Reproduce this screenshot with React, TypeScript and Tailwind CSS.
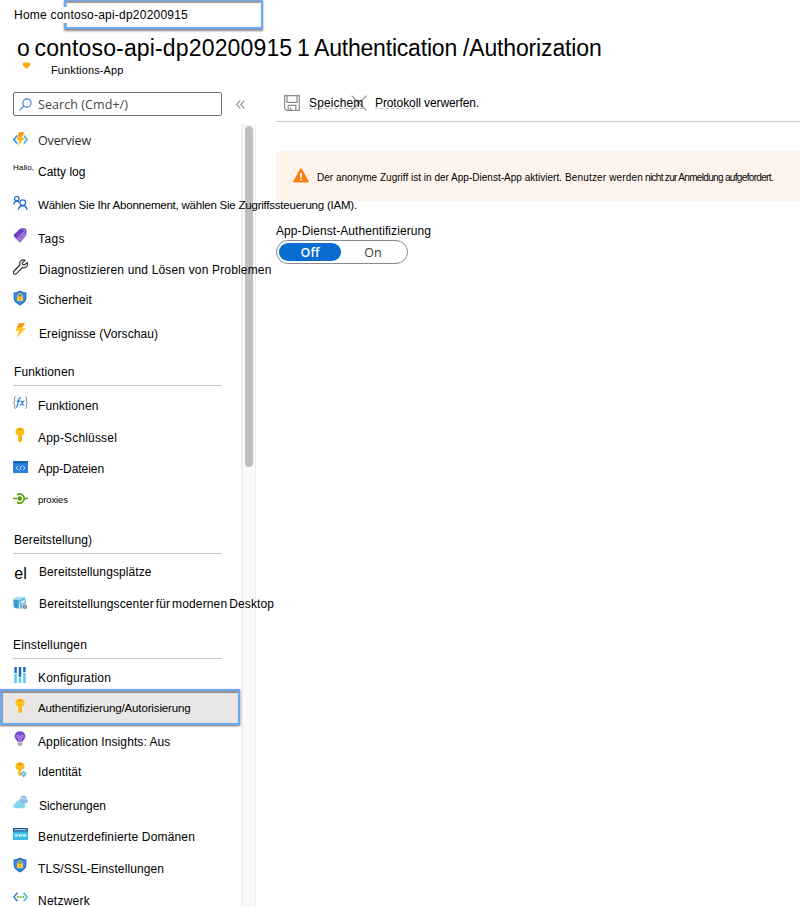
import type { ReactNode } from "react";

function FunctionIcon() {
  return (
    <svg width="15" height="15" viewBox="0 0 15 15" fill="none">
      <path d="M4.2 3.4L0.8 7.5L4.2 11.6" stroke="#2b88e0" strokeWidth="1.5" />
      <path d="M10.8 3.4L14.2 7.5L10.8 11.6" stroke="#32b5e8" strokeWidth="1.5" />
      <path d="M11 0.2H6L3.4 8.2H6.6L4.2 14.8L12 5.8H8.6Z" fill="#ffb52b" />
      <path d="M11 0.2H6L4.6 4.6H9.4Z" fill="#fb9a1a" />
    </svg>
  );
}

function PeopleIcon() {
  return (
    <svg width="16" height="16" viewBox="0 0 16 16" fill="none" stroke="#2a6fdb" strokeWidth="1.4">
      <circle cx="4" cy="3.4" r="2.4" />
      <path d="M0.7 9.6C0.9 7.4 2.2 6.2 4 6.2C5.2 6.2 6 6.6 6.6 7.3" />
      <circle cx="10.4" cy="7.6" r="3" />
      <path d="M5.7 15.4C6 12.6 7.8 10.9 10.4 10.9C13 10.9 14.7 12.6 15 15.4" />
    </svg>
  );
}

function TagIcon() {
  return (
    <svg width="15" height="15" viewBox="0 0 15 15">
      <path d="M1 6.6L6.8 1Q7.6 0.2 8.6 0.3L12 0.6Q13.4 0.7 13.4 2L13.4 6.2Q13.4 7 12.9 7.6L7.8 13.8Q7 14.8 6 13.8L1 8.4Q0.2 7.4 1 6.6Z" fill="#6b3fb8" />
      <path d="M3 10.4L10.4 3.6L13.4 6.2Q13.4 7 12.9 7.6L7.8 13.8Q7 14.8 6 13.8Z" fill="#9a70dc" />
      <circle cx="11.3" cy="2.6" r="0.9" fill="#c9b0f0" />
    </svg>
  );
}

function WrenchIcon() {
  return (
    <svg width="16" height="16" viewBox="0 0 16 16" fill="none" stroke="#2b2b2b" strokeWidth="1.25" strokeLinejoin="round">
      <path d="M12.9 0.9A4 4 0 0 0 7.4 5.9L1 12.3A1.8 1.8 0 0 0 3.7 15L10.1 8.6A4 4 0 0 0 15.1 3.1L12.4 5.8L10.2 5.4L9.9 3.6Z" />
    </svg>
  );
}

function ShieldIcon() {
  return (
    <svg width="14" height="16" viewBox="0 0 14 16" className="mr-px">
      <path d="M7 0.6C9 2 11 2.4 13.4 2.5V7.6C13.4 11.2 10.6 13.8 7 15.4C3.4 13.8 0.6 11.2 0.6 7.6V2.5C3 2.4 5 2 7 0.6Z" fill="#1c6fcb" />
      <path d="M7 1.9C8.8 3 10.3 3.4 12.3 3.5V7.6C12.3 10.6 10 12.8 7 14.2C4 12.8 1.7 10.6 1.7 7.6V3.5C3.7 3.4 5.2 3 7 1.9Z" fill="#3b8de8" />
      <path d="M5.1 7V5.4A1.9 1.9 0 0 1 8.9 5.4V7" fill="none" stroke="#f3b51b" strokeWidth="1.2" />
      <rect x="4" y="6.4" width="6" height="4.7" rx="0.6" fill="#ffc629" />
      <rect x="6.5" y="8" width="1" height="1.7" fill="#d98b00" />
    </svg>
  );
}

function BoltIcon() {
  return (
    <svg width="11" height="15" viewBox="0 0 11 15" className="mr-px">
      <path d="M9.8 0.2H3.8L0.6 7.8H4.2L1.6 14.8L10.8 5.2H6.8Z" fill="#ffc21c" />
      <path d="M9.8 0.2H3.8L2.1 4.2H7.4Z" fill="#fb951a" />
    </svg>
  );
}

function FxIcon() {
  return (
    <svg width="15" height="14" viewBox="0 0 15 14" fill="none">
      <path d="M2.8 0.8H2.2Q1.6 0.8 1.6 1.6V5Q1.6 6.6 0.4 6.8Q1.6 7 1.6 8.6V11.6Q1.6 12.4 2.2 12.4H2.8" stroke="#8a8a8a" strokeWidth="1" />
      <path d="M12.2 0.8H12.8Q13.4 0.8 13.4 1.6V5Q13.4 6.6 14.6 6.8Q13.4 7 13.4 8.6V11.6Q13.4 12.4 12.8 12.4H12.2" stroke="#8a8a8a" strokeWidth="1" />
      <path d="M7.8 2.1Q6.4 1.4 5.9 3.2L4.4 9.8Q4 11.3 2.9 10.8M3.8 5.2H7.2" stroke="#2b7ee0" strokeWidth="1.2" />
      <path d="M7.4 5.3Q8.6 4.8 9 6.6Q9.4 9.6 11.4 9M11.6 5.2Q10.2 4.9 9.2 7Q8.2 9.4 6.8 9.1" stroke="#2b7ee0" strokeWidth="1.1" />
    </svg>
  );
}

function KeyIcon() {
  return (
    <svg width="10" height="16" viewBox="0 0 10 16" className="mr-px">
      <path d="M5 0.5A4.5 4.4 0 0 0 3.1 8.9V13.8L5 15.6L6.9 13.8V8.9A4.5 4.4 0 0 0 5 0.5Z" fill="#fdbf1a" />
      <path d="M5 9V15.6L6.9 13.8V8.9Z" fill="#f8ad10" />
      <rect x="3.4" y="2" width="3.2" height="1.1" rx="0.5" fill="#d08a08" />
    </svg>
  );
}

function FilesIcon() {
  return (
    <svg width="15" height="12" viewBox="0 0 15 12" fill="none">
      <rect width="15" height="12" rx="0.6" fill="#2e7fdc" />
      <rect width="15" height="2.2" rx="0.6" fill="#1263bd" />
      <path d="M5.2 4.8L3 7L5.2 9.2M9.8 4.8L12 7L9.8 9.2M8.4 4.6L6.6 9.4" stroke="#b8dcff" strokeWidth="1" />
    </svg>
  );
}

function ProxyIcon() {
  return (
    <svg width="15" height="11" viewBox="0 0 15 11" fill="none">
      <path d="M0 5.5H4.6M11.6 5.5H15" stroke="#57a300" strokeWidth="1.6" />
      <path d="M4 1.8A4.5 4.5 0 1 1 4 9.2" stroke="#57a300" strokeWidth="1.7" />
      <circle cx="6.8" cy="5.5" r="2.2" fill="#4c9a10" />
    </svg>
  );
}

function DeployIcon() {
  return (
    <svg width="16" height="14" viewBox="0 0 16 14">
      <path d="M0.2 3L3.8 0.4L11.4 0.2L6.4 3.4Z" fill="#a9def1" />
      <path d="M0.2 3.2L6.2 3.6V13L1 11.8Z" fill="#3a9bc9" />
      <path d="M6.6 3.8L12.2 0.6L13.6 3V11L7.4 13.4Z" fill="#63b5da" />
      <path d="M8.6 5.6L12.6 3.2V6L8.9 8Z" fill="#e4f6fc" />
      <circle cx="12.6" cy="11" r="3" fill="#ffffff" />
      <circle cx="12.6" cy="11" r="2.4" fill="#76868f" />
      <circle cx="12.6" cy="11" r="0.8" fill="#d9e2e6" />
    </svg>
  );
}

function SlidersIcon() {
  return (
    <svg width="12" height="16" viewBox="0 0 12 16" className="mr-px">
      <path d="M0.4 0H2.8V6H0.4ZM4.8 0H7.2V10H4.8ZM9.2 0H11.6V5H9.2Z" fill="#1769c4" />
      <path d="M0.4 6.8H2.8V16H0.4ZM4.8 10.8H7.2V16H4.8ZM9.2 5.8H11.6V16H9.2Z" fill="#4ccdf0" />
    </svg>
  );
}

function InsightsIcon() {
  return (
    <svg width="12" height="15" viewBox="0 0 12 15" className="mr-px">
      <path d="M6 0.2A5.1 5.1 0 0 0 0.7 5.2C0.7 8 3.2 8.6 3.4 11H8.6C8.8 8.6 11.3 8 11.3 5.2A5.1 5.1 0 0 0 6 0.2Z" fill="#7a48cc" />
      <path d="M5 11V6.4H4A1.1 1.1 0 1 1 5 5.3H7A1.1 1.1 0 1 1 8 6.4H7V11" fill="none" stroke="#c3a4f0" strokeWidth="0.9" />
      <path d="M3.6 11.4H8.4V13L7.4 14.7H4.6L3.6 13Z" fill="#a3a3a8" />
    </svg>
  );
}

function IdentityIcon() {
  return (
    <svg width="12" height="16" viewBox="0 0 12 16">
      <path d="M5 0.3A4.5 4 0 0 0 3.2 8V12.6L5 14.4L6.6 12.8L5.6 11.6L6.8 10.4L5.8 9.2L6.8 8A4.5 4 0 0 0 5 0.3Z" fill="#fcbd1c" />
      <rect x="3" y="1.5" width="4" height="1.2" rx="0.6" fill="#d08a08" />
      <path d="M8.6 8.8L11.9 12.1L8.6 15.4L5.3 12.1Z" fill="#5eb3d8" />
      <path d="M8.6 10.4L10.2 12.8H7Z" fill="#d7f3fc" />
    </svg>
  );
}

function CloudIcon() {
  return (
    <svg width="15" height="14" viewBox="0 0 15 14">
      <path d="M6.4 8.6C4.8 6.8 5.4 4.4 7.4 4C7.6 1.8 9 0.4 11 0.6C12.8 0.8 13.6 2.2 13.6 3.8C15.4 4.6 15.4 7.6 13.4 8.2Z" fill="#8fbdec" />
      <path d="M7.8 5.4A2.8 2.8 0 0 1 12.8 4.4" fill="none" stroke="#d9ecfb" strokeWidth="0.9" />
      <path d="M2.8 13.2C-0.4 13 -0.6 8.8 2.4 8.4C2.8 5.4 7.2 4.6 8.6 7.8C11.4 7.6 12.6 9.2 12.4 10.6C12.2 12.4 11 13.2 9.6 13.2Z" fill="#84d5ee" />
    </svg>
  );
}

function DomainIcon() {
  return (
    <svg width="15" height="12" viewBox="0 0 15 12" fill="none">
      <rect width="15" height="12" rx="0.6" fill="#35bfe6" />
      <rect width="15" height="3.4" rx="0.6" fill="#1a5da5" />
      <rect x="1.4" y="1" width="12.2" height="1.4" fill="#a9b9cc" />
      <path d="M2 6L2.8 8.6L3.6 6.4L4.4 8.6L5.2 6M6 6L6.8 8.6L7.5 6.4L8.2 8.6L9 6M9.8 6L10.6 8.6L11.4 6.4L12.2 8.6L13 6" stroke="#e8fbff" strokeWidth="0.8" />
    </svg>
  );
}

function NetworkIcon() {
  return (
    <svg width="15" height="10" viewBox="0 0 15 10" fill="none">
      <path d="M4.4 0.7L0.9 5L4.4 9.3" stroke="#2d82d8" strokeWidth="1.5" />
      <path d="M10.6 0.7L14.1 5L10.6 9.3" stroke="#35b8d8" strokeWidth="1.5" />
      <circle cx="4.9" cy="5" r="1" fill="#6cb33f" />
      <circle cx="7.5" cy="5" r="1" fill="#6cb33f" />
      <circle cx="10.1" cy="5" r="1" fill="#6cb33f" />
    </svg>
  );
}

function SaveIcon() {
  return (
    <svg width="16" height="16" viewBox="0 0 16 16" fill="none" stroke="#8c8c8c" strokeWidth="1.2">
      <path d="M0.7 0.7H15.3V15.3H2.6L0.7 13.4Z" />
      <path d="M3 0.7V7.4H13V0.7M4.2 15.3V10.4H11.8V15.3M6.6 12.2V15.3" />
    </svg>
  );
}

type RowProps = {
  icon: ReactNode;
  label: string;
  row: string;
  lift: string;
  text: string;
};

function Row({ icon, label, row, lift, text }: RowProps) {
  return (
    <div className={`flex items-start pl-[13px] ${row}`}>
      <span className={`flex h-5 w-[15px] shrink-0 items-center justify-center ${lift}`}>{icon}</span>
      <span className={`leading-5 ${text}`}>{label}</span>
    </div>
  );
}

function Section({ label, className }: { label: string; className: string }) {
  return (
    <div className={`ml-[13px] w-[209px] border-b border-[#c6c6c6] leading-5 ${className}`}>{label}</div>
  );
}

function Sidebar() {
  return (
    <nav className="relative z-10 w-[241px] shrink-0 pt-[6px] text-[12px]">
      <Row icon={<FunctionIcon />} label="Overview" row="h-[32px]" lift="-mt-px" text="mt-px ml-[10px] font-['Open_Sans'] text-[12.5px] tracking-[-0.15px] text-[#2b2b2b]" />
      <Row
        icon={<span className="text-[8px] leading-5 tracking-[0.1px]">Hallo,</span>}
        label="Catty log"
        row="h-[33px]"
        lift="-mt-[4px] pl-[6px]"
        text="ml-[10px] tracking-[0.01px]"
      />
      <Row icon={<PeopleIcon />} label="Wählen Sie Ihr Abonnement, wählen Sie Zugriffssteuerung (IAM)." row="h-[34px]" lift="-mt-[2px]" text="ml-[10px] text-[11.5px] tracking-[-0.225px]" />
      <Row icon={<TagIcon />} label="Tags" row="h-[31px]" lift="-mt-[4px]" text="ml-[10px] tracking-[0.4px]" />
      <Row icon={<WrenchIcon />} label="Diagnostizieren und Lösen von Problemen" row="h-[30px]" lift="-mt-[3px]" text="ml-[11px] tracking-[0.163px]" />
      <Row icon={<ShieldIcon />} label="Sicherheit" row="h-[34px]" lift="-mt-[2px]" text="ml-[10px] tracking-[0.06px]" />
      <Row icon={<BoltIcon />} label="Ereignisse (Vorschau)" row="h-[38px]" lift="-mt-[4px]" text="ml-[11px] tracking-[0.08px]" />

      <Section label="Funktionen" className="mb-[10px] h-[24px] pl-px tracking-[0.11px]" />
      <Row icon={<FxIcon />} label="Funktionen" row="h-[32px]" lift="-mt-[3px]" text="ml-[10px] tracking-[0.11px]" />
      <Row icon={<KeyIcon />} label="App-Schlüssel" row="h-[31px]" lift="-mt-[3px]" text="ml-[10px] tracking-[0.175px]" />
      <Row icon={<FilesIcon />} label="App-Dateien" row="h-[31px]" lift="-mt-[2px]" text="ml-[10px] tracking-[-0.065px]" />
      <Row icon={<ProxyIcon />} label="proxies" row="h-[40px]" lift="-mt-[2px]" text="ml-[10px] text-[9.5px] tracking-[-0.1px]" />

      <Section label="Bereitstellung)" className="mb-[8px] h-[24px] pl-px tracking-[0.085px]" />
      <Row
        icon={<span className="text-[16px] leading-5">el</span>}
        label="Bereitstellungsplätze"
        row="h-[32px]"
        lift="mt-[2px]"
        text="ml-[11px] tracking-[0.084px]"
      />
      <Row icon={<DeployIcon />} label="Bereitstellungscenter für modernen Desktop" row="h-[41px]" lift="-mt-px" text="ml-[11px] tracking-[0.13px] [word-spacing:-1.5px]" />

      <Section label="Einstellungen" className="mb-[9px] h-[24px] tracking-[0.149px]" />
      <Row icon={<SlidersIcon />} label="Konfiguration" row="h-[21px]" lift="-mt-[3px]" text="ml-[10px] tracking-[0.175px]" />
      <div className="mb-[7px] h-[36px] w-[240px] border-[2px] border-[#6ea8f5] bg-[#e9e7e5] shadow-[0_1px_2px_#6b6b6b,inset_0_2px_1px_#8f8f8f,inset_1px_0_1px_#9a9a9a]">
        <Row icon={<KeyIcon />} label="Authentifizierung/Autorisierung" row="-ml-[2px] pt-[7px]" lift="-mt-[2px]" text="ml-[10px] text-[11.5px] tracking-[-0.13px]" />
      </div>
      <Row icon={<InsightsIcon />} label="Application Insights: Aus" row="h-[30px]" lift="-mt-[4px]" text="ml-[10px] tracking-[0.12px] [word-spacing:-0.3px]" />
      <Row icon={<IdentityIcon />} label="Identität" row="h-[34px]" lift="-mt-[2px]" text="ml-[10px] tracking-[0.09px]" />
      <Row icon={<CloudIcon />} label="Sicherungen" row="h-[31px]" lift="-mt-[4px]" text="ml-[11px] tracking-[-0.036px]" />
      <Row icon={<DomainIcon />} label="Benutzerdefinierte Domänen" row="h-[32px]" lift="-mt-[3px]" text="ml-[10px] tracking-[0.163px]" />
      <Row icon={<ShieldIcon />} label="TLS/SSL-Einstellungen" row="h-[32px]" lift="-mt-[4px]" text="ml-[10px] tracking-[0.09px]" />
      <Row icon={<NetworkIcon />} label="Netzwerk" row="h-[20px]" lift="-mt-[4px]" text="ml-[10px] tracking-[0.25px]" />
    </nav>
  );
}

function Header() {
  return (
    <header className="h-[92px]">
      <div className="relative h-[32px]">
        <div className="absolute -top-px left-[64px] h-[30px] w-[199px] border-[2px] border-[#6ea8f5] shadow-[0_2px_2px_#888,inset_0_2px_1px_#999,inset_1px_0_1px_#bbb]" />
        <div className="relative ml-[14px] w-[175px] pt-[7px] text-[12px] leading-4 tracking-[0.218px]">
          <span className="block bg-white">Home contoso-api-dp20200915</span>
        </div>
      </div>
      <h1 className="flex h-[30px] items-start pt-px pl-[17px] text-[23px] leading-[30px]">
        <span className="w-[17.5px] shrink-0">o</span>
        <span className="w-[262.5px] shrink-0 tracking-[0.15px]">contoso-api-dp20200915</span>
        <span className="w-[17px] shrink-0">1</span>
        <span className="w-[149px] shrink-0 tracking-[-0.2px]">Authentication</span>
        <span className="tracking-[-0.15px]">/Authorization</span>
      </h1>
      <div className="flex items-start pl-[22px]">
        <svg width="9" height="7" viewBox="0 0 9 7">
          <path d="M0.5 2.6Q0.5 0.6 2.4 0.6H6.6Q8.5 0.6 8.5 2.6Q8.2 4 4.5 6.8Q0.8 4 0.5 2.6Z" fill="#fda915" />
        </svg>
        <span className="ml-[20px] text-[11px] leading-4 tracking-[0.12px]">Funktions-App</span>
      </div>
    </header>
  );
}

export default function App() {
  return (
    <div className="h-[907px] w-[800px] overflow-hidden bg-white font-['Liberation_Sans',Arial,sans-serif] whitespace-nowrap text-black">
      <Header />
      <div className="flex h-[815px]">
        <aside className="flex w-[256px] shrink-0 flex-col">
          <div className="flex h-[32px] items-start pl-[13px]">
            <div className="flex h-[24px] w-[209px] items-center rounded-[2px] border border-[#707070] pl-[5px]">
              <svg width="13" height="13" viewBox="0 0 13 13" fill="none" stroke="#2a7fd4" strokeWidth="1.1">
                <circle cx="8" cy="5" r="4.1" />
                <path d="M5 7.9L0.6 12.3" />
              </svg>
              <span className="mt-px ml-[6px] font-['Open_Sans'] text-[12.5px] leading-5 tracking-[0.07px] text-[#444444]">Search (Cmd+/)</span>
            </div>
            <svg width="9" height="9" viewBox="0 0 9 9" fill="none" stroke="#808080" strokeWidth="1.1" className="mt-[8px] ml-[14px]">
              <path d="M4.2 0.5L0.7 4.5L4.2 8.5M8.3 0.5L4.8 4.5L8.3 8.5" />
            </svg>
          </div>
          <div className="flex min-h-0 flex-1">
            <Sidebar />
            <div className="w-[15px] shrink-0 border-r border-l-2 border-[#ededed] bg-[#fafafa] pt-[2px]">
              <div className="ml-[2px] h-[341px] w-[8px] rounded-full bg-[#bfbfbf]" />
            </div>
          </div>
        </aside>
        <main className="flex-1 pl-[20px] text-[12px]">
          <div className="flex h-[30px] items-start border-b border-[#cccccc] pl-[8px]">
            <span className="mt-[3px]">
              <SaveIcon />
            </span>
            <span className="relative z-10 mt-px ml-[9px] w-[42px] leading-5 tracking-[0.14px] underline decoration-[#b5b5b5] decoration-dashed decoration-1 underline-offset-[1px]">Speichem</span>
            <svg width="16" height="16" viewBox="0 0 16 16" fill="none" stroke="#8c8c8c" strokeWidth="1.2" className="mt-[3px]">
              <path d="M0.6 0.6L15.4 15.4M15.4 0.6L0.6 15.4" />
            </svg>
            <span className="mt-px ml-[8px] leading-5 tracking-[-0.1px]">
              <span className="underline decoration-[#b5b5b5] decoration-dashed decoration-1 underline-offset-[1px]">Protoko</span>ll verwerfen.
            </span>
          </div>
          <div className="mt-[29px] flex h-[50px] items-center rounded-l-[2px] bg-[#fff4ec] pl-[17px] text-[10px]">
            <svg width="16" height="15" viewBox="0 0 16 15" className="-mt-[2px]">
              <path d="M8 0.4Q8.7 0.4 9.1 1.2L15.7 13.2Q16.2 14.6 14.8 14.6H1.2Q-0.2 14.6 0.3 13.2L6.9 1.2Q7.3 0.4 8 0.4Z" fill="#fb7f0e" />
              <path d="M7.1 5H8.9V9.8H7.1ZM7.1 11H8.9V12.6H7.1Z" fill="#ffffff" />
            </svg>
            <span className="mt-[2px] ml-[8px] tracking-[0.011px]">Der anonyme Zugriff ist in der App-Dienst-App aktiviert.</span>
            <span className="mt-[2px] ml-[3px] tracking-[0.159px]">Benutzer werden</span>
            <span className="mt-[2px] ml-[2px] tracking-[-0.67px]">nicht zur Anmeldung aufgefordert.</span>
          </div>
          <div className="mt-[20px] leading-5 tracking-[0.08px]">App-Dienst-Authentifizierung</div>
          <div className="-mt-px flex h-[24px] w-[132px] items-center rounded-full border-[1.5px] border-[#8a8a8a] p-[2px] font-['Open_Sans'] text-[12.5px] leading-[18px]">
            <div className="h-[18px] w-[62px] rounded-full bg-[#0a6cd0] pt-px text-center font-semibold text-white">Off</div>
            <div className="h-[18px] flex-1 pt-px text-center font-medium text-[#3c3c3c]">On</div>
          </div>
        </main>
      </div>
    </div>
  );
}
